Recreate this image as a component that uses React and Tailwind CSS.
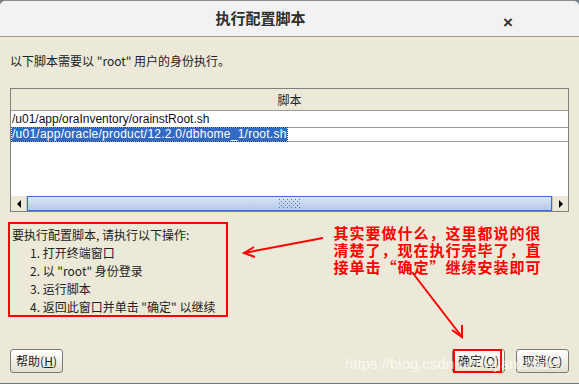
import React from "react";

const cjk = { fontFamily: '"Noto Sans CJK SC", "Noto Sans", sans-serif' };
const latin = { fontFamily: '"Liberation Sans", "Noto Sans CJK SC", sans-serif' };

function Btn({ label, k, boxed }) {
  return (
    <div className="relative">
      <div
        className="h-[24px] w-[53px] flex items-center justify-center rounded-[3px] border border-[#7a7a7a] bg-gradient-to-b from-white to-[#e3e0d0] text-[12px] text-[#222]"
        style={cjk}
      >
        {label}(<span className="underline">{k}</span>)
      </div>
      {boxed && <div className="absolute left-[1px] top-0 w-[49px] h-[24px] border-2 border-[#ff0000]" />}
    </div>
  );
}

const notes = ["其实要做什么，这里都说的很", "清楚了，现在执行完毕了，直", "接单击“确定”继续安装即可"];

export default function App() {
  return (
    <div className="relative w-[579px] h-[384px] overflow-hidden bg-[#6f7d86]">
      <div className="flex flex-col w-[579px] h-[383px] bg-[#ece9d8] rounded-tl-[6px] rounded-tr-[6px] overflow-hidden border-t border-[#8a8a8a]">
        {/* title bar */}
        <div className="relative h-[36px] shrink-0 bg-[#f2f2f2] border-b border-[#9a9a9a] flex items-center justify-center">
          <span className="text-[15px] font-bold text-[#2e2e2e] ml-[-58px]" style={cjk}>执行配置脚本</span>
          <span className="absolute right-[66px] top-[9px] text-[17px] font-bold text-[#333]" style={latin}>×</span>
        </div>

        {/* body */}
        <div className="flex flex-col px-[10px]">
          <div className="mt-[15px] h-[18px] text-[12px] text-[#222] leading-[18px]" style={cjk}>
            以下脚本需要以 "root" 用户的身份执行。
          </div>

          {/* table */}
          <div className="mt-[18px] w-[559px] border border-[#808080] flex flex-col bg-white">
            <div className="h-[22px] bg-[#ece9d8] border-b border-[#9a9a9a] flex items-center justify-center text-[12px] text-[#222]" style={cjk}>
              脚本
            </div>
            <div className="h-[17px] border-b border-[#9a9a9a] flex items-center pl-[1px] text-[12px] text-[#111]" style={latin}>
              /u01/app/oraInventory/orainstRoot.sh
            </div>
            <div className="h-[14px] border-b border-[#9a9a9a] flex items-center pl-[1px] text-[12px] tracking-[0.25px]" style={latin}>
              <span className="bg-[#316ac5] text-white leading-[13px] outline-1 outline-dotted outline-[#1c3f80]">/u01/app/oracle/product/12.2.0/dbhome_1/root.sh</span>
            </div>
            <div className="h-[54px] bg-white" />
            {/* scrollbar */}
            <div className="h-[15px] flex bg-[#ece9d8]">
              <div className="w-[16px] flex items-center justify-center border-r border-[#c8c8c8]">
                <svg width="6" height="8" viewBox="0 0 6 8"><path d="M5 0 L1 4 L5 8 Z" fill="#000" /></svg>
              </div>
              <div className="flex-1 border border-[#3a6fd0] bg-gradient-to-b from-[#dbe6f6] to-[#b4c8e8] flex items-center justify-center">
                <svg width="22" height="9" viewBox="0 0 22 9">
                  {[0, 1, 2, 3, 4].map((r) =>
                    [0, 1, 2, 3, 4, 5].map((c) => (
                      <rect key={r + "-" + c} x={c * 4 + (r % 2) * 2} y={r * 2} width="1" height="1" fill="#4a6fb8" />
                    ))
                  )}
                </svg>
              </div>
              <div className="w-[16px] flex items-center justify-center border-l border-[#c8c8c8]">
                <svg width="6" height="8" viewBox="0 0 6 8"><path d="M1 0 L5 4 L1 8 Z" fill="#000" /></svg>
              </div>
            </div>
          </div>

          {/* instructions box */}
          <div className="mt-[10px] ml-[-2px] w-[220px] h-[95px] border-2 border-[#ff0000] flex flex-col pl-[2px] pt-[2px] text-[12px] text-[#222] leading-[18px]" style={cjk}>
            <div>要执行配置脚本, 请执行以下操作:</div>
            <div className="pl-[18px]">1. 打开终端窗口</div>
            <div className="pl-[18px]">2. 以 "root" 身份登录</div>
            <div className="pl-[18px]">3. 运行脚本</div>
            <div className="pl-[18px]">4. 返回此窗口并单击 "确定" 以继续</div>
          </div>
        </div>

        {/* buttons */}
        <div className="mt-auto mb-[10px] flex items-center px-[10px]">
          <Btn label="帮助" k="H" />
          <div className="flex-1" />
          <div className="mr-[11px]"><Btn label="确定" k="O" boxed /></div>
          <Btn label="取消" k="C" />
        </div>
      </div>

      {/* annotation text */}
      <div className="absolute left-[333px] top-[224px] flex flex-col text-[15px] font-bold text-[#ff0000] leading-[17px]" style={cjk}>
        {notes.map((line) => (
          <div key={line} className="flex">
            {Array.from(line).map((ch, i) => (
              <span key={i} className="w-[16px] text-center">{ch}</span>
            ))}
          </div>
        ))}
      </div>

      {/* arrows */}
      <svg className="absolute left-0 top-0 pointer-events-none" width="579" height="384" viewBox="0 0 579 384">
        <path d="M323 238 L244 253" stroke="#ff0000" strokeWidth="2" fill="none" />
        <path d="M254 247 L244 253 L255 257" stroke="#ff0000" strokeWidth="2" fill="none" />
        <path d="M412 272 L462 337" stroke="#ff0000" strokeWidth="2" fill="none" />
        <path d="M452 330 L462 337 L462 325" stroke="#ff0000" strokeWidth="2" fill="none" />
      </svg>

      {/* watermark */}
      <div className="absolute left-[345px] top-[353px] text-[15px] text-white/70" style={latin}>
        https://blog.csdn.net/wjianzhaoa
      </div>
    </div>
  );
}
